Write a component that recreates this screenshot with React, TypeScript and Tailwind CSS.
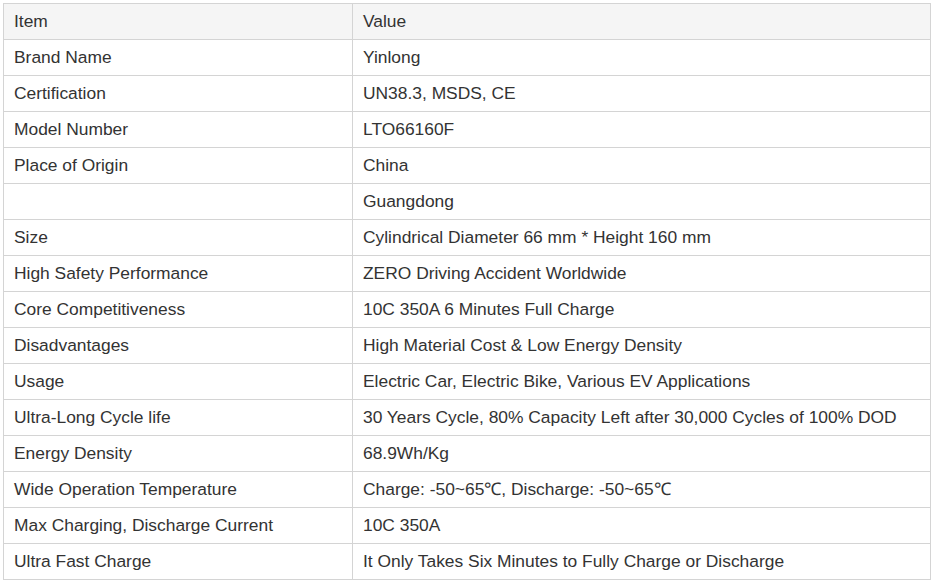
const rows: [string, string][] = [
  ["Brand Name", "Yinlong"],
  ["Certification", "UN38.3, MSDS, CE"],
  ["Model Number", "LTO66160F"],
  ["Place of Origin", "China"],
  ["", "Guangdong"],
  ["Size", "Cylindrical Diameter 66 mm * Height 160 mm"],
  ["High Safety Performance", "ZERO Driving Accident Worldwide"],
  ["Core Competitiveness", "10C 350A 6 Minutes Full Charge"],
  ["Disadvantages", "High Material Cost & Low Energy Density"],
  ["Usage", "Electric Car, Electric Bike, Various EV Applications"],
  ["Ultra-Long Cycle life", "30 Years Cycle, 80% Capacity Left after 30,000 Cycles of 100% DOD"],
  ["Energy Density", "68.9Wh/Kg"],
  ["Wide Operation Temperature", "Charge: -50~65℃, Discharge: -50~65℃"],
  ["Max Charging, Discharge Current", "10C 350A"],
  ["Ultra Fast Charge", "It Only Takes Six Minutes to Fully Charge or Discharge"],
];

const cell = "h-[36px] border border-[#d4d4d4] px-[10px] text-left align-middle font-normal whitespace-nowrap";

export default function App() {
  return (
    <div className="bg-white p-[3px] pr-[7px]" style={{ fontFamily: '"Liberation Sans", Arial, sans-serif' }}>
      <table className="w-full table-fixed border-collapse text-[17.4px] text-[#333]">
        <colgroup>
          <col className="w-[349px]" />
          <col />
        </colgroup>
        <thead>
          <tr className="bg-[#f5f5f5]">
            <th className={cell}>Item</th>
            <th className={cell}>Value</th>
          </tr>
        </thead>
        <tbody>
          {rows.map(([k, v], i) => (
            <tr key={i}>
              <td className={cell}>{k}</td>
              <td className={cell}>{v}</td>
            </tr>
          ))}
        </tbody>
      </table>
    </div>
  );
}
